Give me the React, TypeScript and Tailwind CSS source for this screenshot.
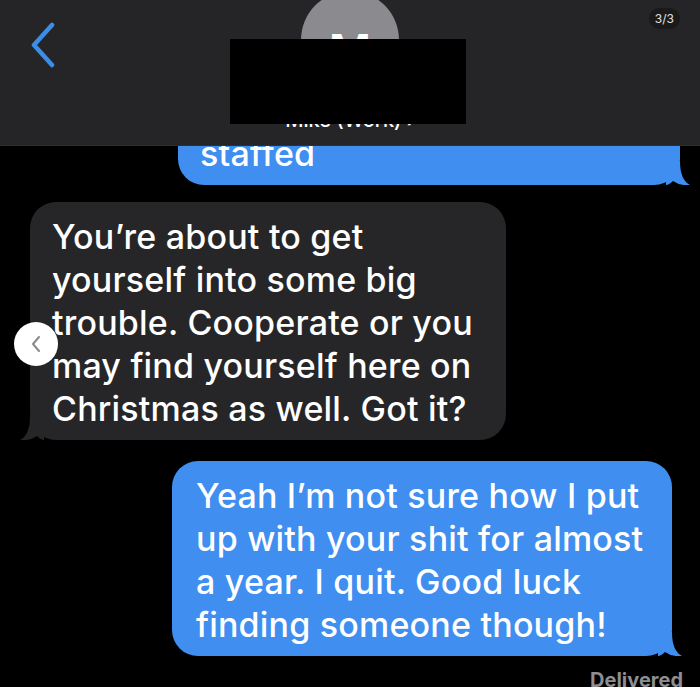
const font = { fontFamily: 'Inter, "Liberation Sans", sans-serif' }

function TailRight({ color }: { color: string }) {
  return (
    <svg className="absolute right-[-10px] bottom-0" width="24" height="24" viewBox="0 0 24 24">
      <path d="M0 0 H14 Q14 19 24 24 Q14 25 7 20 Q3 24 0 24 Z" fill={color} />
    </svg>
  )
}

function TailLeft({ color }: { color: string }) {
  return (
    <svg className="absolute left-[-10px] bottom-0" width="24" height="24" viewBox="0 0 24 24">
      <path d="M24 0 H10 Q10 19 0 24 Q10 25 17 20 Q21 24 24 24 Z" fill={color} />
    </svg>
  )
}

export default function App() {
  return (
    <div className="relative w-[700px] h-[687px] overflow-hidden bg-black flex flex-col" style={font}>
      {/* nav bar */}
      <div className="relative z-10 h-[146px] flex-none bg-[#252527] border-b border-[#2f2f31] grid grid-cols-[1fr_auto_1fr] overflow-hidden">
        <div className="pl-[28px] pt-[22px]">
          <svg width="30" height="46" viewBox="0 0 30 46">
            <path d="M24 3 L6 23 L24 43" fill="none" stroke="#3b8ee8" strokeWidth="4.5" strokeLinecap="round" strokeLinejoin="round" />
          </svg>
        </div>
        <div className="flex flex-col items-center">
          <div className="mt-[-9px] w-[98px] h-[98px] rounded-full bg-[#8a8a8f] flex items-center justify-center pt-[22px]">
            <span className="text-white text-[46px] font-semibold leading-none">M</span>
          </div>
          <div className="mt-[19px] text-white text-[20px] leading-[24px] font-medium whitespace-nowrap">Mike (Work) ›</div>
        </div>
        <div />
        <div className="absolute left-[230px] top-[39px] w-[236px] h-[85px] bg-black" />
        <div className="absolute right-[20px] top-[8px] h-[21px] px-[6px] rounded-full bg-[#1a1a1b] text-[#e0e0e0] text-[12px] leading-[21px]">3/3</div>
      </div>

      {/* messages */}
      <div className="flex flex-col text-white text-[34px] leading-[43px] tracking-[0.2px]">
        <div className="relative self-end mr-[20px] mt-[-27px] w-[502px] rounded-[26px] bg-[#3f8ef0] pl-[22px] pt-[13px] pb-[10px] font-medium">
          staffed
          <TailRight color="#3f8ef0" />
        </div>

        <div className="relative ml-[30px] mt-[17px] w-[476px] rounded-[26px] bg-[#262628] pl-[22px] pt-[13px] pb-[10px] font-medium whitespace-nowrap">
          You’re about to get<br />
          yourself into some big<br />
          trouble. Cooperate or you<br />
          may find yourself here on<br />
          Christmas as well. Got it?
          <TailLeft color="#262628" />
        </div>

        <div className="relative self-end mr-[28px] mt-[21px] w-[500px] rounded-[26px] bg-[#3f8ef0] pl-[24px] pt-[13px] pb-[10px] font-medium whitespace-nowrap">
          Yeah I’m not sure how I put<br />
          up with your shit for almost<br />
          a year. I quit. Good luck<br />
          finding someone though!
          <TailRight color="#3f8ef0" />
        </div>

        <div className="self-end mr-[17px] mt-[12px] text-[#8e8e93] text-[20px] leading-[24px] font-bold tracking-normal">Delivered</div>
      </div>

      {/* viewer previous button */}
      <div className="absolute left-[14px] top-[322px] w-[44px] h-[44px] rounded-full bg-white flex items-center justify-center">
        <svg width="14" height="20" viewBox="0 0 14 20">
          <path d="M10 3 L4 10 L10 17" fill="none" stroke="#8a8a8a" strokeWidth="2" strokeLinecap="round" strokeLinejoin="round" />
        </svg>
      </div>
    </div>
  )
}
